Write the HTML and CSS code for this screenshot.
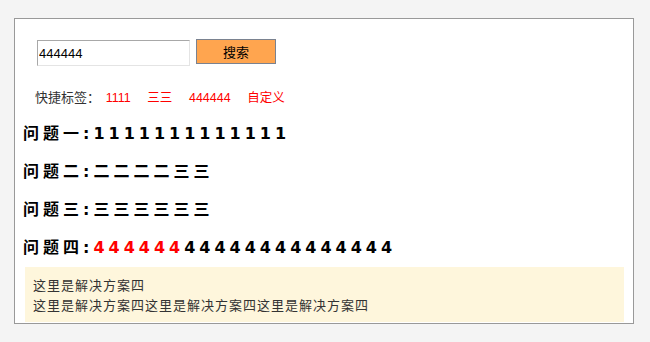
FILE: index.html
```html
<!DOCTYPE html>
<html lang="zh-CN">
<head>
  <meta charset="UTF-8" />
  <title>问题列表</title>
  <link rel="stylesheet" href="styles.css">
</head>
<body>
  <div class="wrap">
    <!-- search -->
    <form class="search">
      <input class="search-input" type="text" value="444444">
      <button class="search-btn" type="button">搜索</button>
    </form>

    <div class="tags">
      <span class="tags-label">快捷标签：</span>
      <a href="#">1111</a>
      <a href="#">三三</a>
      <a href="#">444444</a>
      <a href="#">自定义</a>
    </div>

    <h3 class="question">问题一:1111111111111</h3>
    <h3 class="question">问题二:二二二二三三</h3>
    <h3 class="question">问题三:三三三三三三</h3>
    <h3 class="question">问题四:<span class="hl">444444</span>44444444444444</h3>

    <div class="answer">
      <p>这里是解决方案四</p>
      <p>这里是解决方案四这里是解决方案四这里是解决方案四</p>
    </div>
  </div>
</body>
</html>
```

FILE: styles.css
```css
* {
  margin: 0;
  padding: 0;
  box-sizing: border-box;
}

body {
  background: #f4f4f4;
  padding: 18px 16px 0 14px;
  font-family: "Liberation Sans", "Noto Sans CJK SC", sans-serif;
  font-size: 13px;
  color: #333;
}

.wrap {
  width: 620px;
  height: 306px;
  background: #fff;
  border: 1px solid #999;
  overflow: hidden;
}

.search {
  display: flex;
  align-items: flex-start;
  padding: 20px 0 0 22px;
}

.search-input {
  width: 153px;
  height: 26px;
  margin-top: 1px;
  padding: 0 1px;
  border: 1px solid #e4e4e4;
  border-top-color: #a8a8a8;
  border-left-color: #a8a8a8;
  font-family: "Liberation Sans", sans-serif;
  font-size: 13px;
  color: #000;
  outline: none;
}

.search-btn {
  width: 80px;
  height: 25px;
  margin-left: 6px;
  background: #ffa54f;
  border: 1px solid #7a8290;
  font-family: "Noto Sans CJK SC", sans-serif;
  font-size: 13px;
  color: #000;
}

.tags {
  margin-top: 22px;
  padding-left: 20px;
  line-height: 20px;
}

.tags-label {
  margin-right: 2px;
}

.tags a {
  color: #f00;
  font-size: 12.5px;
  text-decoration: none;
  margin-right: 13px;
}

.question {
  margin-top: 7px;
  padding-left: 8px;
  font-family: "DejaVu Sans", "Noto Sans CJK SC", sans-serif;
  font-size: 16px;
  font-weight: bold;
  letter-spacing: 4px;
  line-height: 38px;
  height: 38px;
  color: #000;
}

.question + .question {
  margin-top: 0;
}

.question .hl {
  color: #f00;
}

.answer {
  margin: 0 9px 0 10px;
  padding: 8px 8px 7px;
  background: #fef6dc;
  font-family: "Noto Sans CJK SC", sans-serif;
  font-size: 13px;
  letter-spacing: 1px;
  line-height: 20px;
  color: #333;
}
```
